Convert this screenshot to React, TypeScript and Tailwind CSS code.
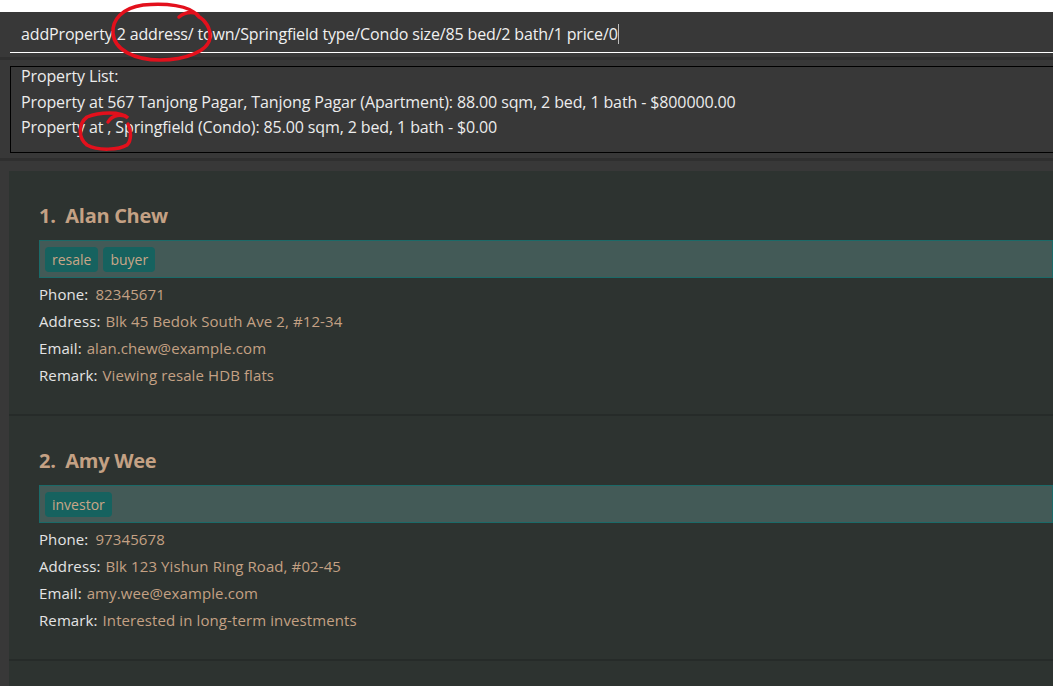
import React from "react";

const persons = [
  {
    name: "Alan Chew",
    tags: ["resale", "buyer"],
    phone: "82345671",
    address: "Blk 45 Bedok South Ave 2, #12-34",
    email: "alan.chew@example.com",
    remark: "Viewing resale HDB flats",
  },
  {
    name: "Amy Wee",
    tags: ["investor"],
    phone: "97345678",
    address: "Blk 123 Yishun Ring Road, #02-45",
    email: "amy.wee@example.com",
    remark: "Interested in long-term investments",
  },
  {
    name: "",
    tags: [],
    phone: "",
    address: "",
    email: "",
    remark: "",
  },
];

const Row = ({ label, value, extra = false }) => (
  <div className="flex text-[15px] leading-[27px] tracking-[0.1px]">
    <span className="text-[#e4e4e4]">{label}</span>
    <span className={`text-[#c4a184] ${extra ? "ml-[7px]" : "ml-[5px]"}`}>{value}</span>
  </div>
);

const PersonCard = ({ person, index }) => (
  <div className="h-[245px] border-b-2 border-[#262b29] bg-[#2d3330] pl-[30px] pt-[31px]">
    {person.name && (
      <>
        <p className="text-[20px] font-bold leading-[28px] tracking-[-0.3px] text-[#c4a184]">
          {index + 1}.&nbsp; {person.name}
        </p>
        <div className="mt-[10px] flex h-[38px] items-center gap-[5px] border border-[#1b6a68] bg-[#435a57] px-[5px]">
          {person.tags.map((tag) => (
            <span
              key={tag}
              className="rounded-[4px] bg-[#16625f] px-[7px] text-[14px] leading-[25px] text-[#c9a688]"
            >
              {tag}
            </span>
          ))}
        </div>
        <div className="mt-[3px]">
          <Row label="Phone:" value={person.phone} extra />
          <Row label="Address:" value={person.address} />
          <Row label="Email:" value={person.email} />
          <Row label="Remark:" value={person.remark} />
        </div>
      </>
    )}
  </div>
);

const App = () => {
  return (
    <div className="relative h-[686px] w-[1053px] overflow-hidden bg-white font-['Open_Sans',sans-serif]">
      <div className="h-3 bg-white" />
      <div className="flex h-[674px] flex-col bg-[#383838]">
        {/* command box */}
        <div className="pl-[10px]">
          <div className="flex h-[41px] items-start border-b border-white pl-[11px] pt-[10px]">
            <span className="text-[16px] leading-[24px] tracking-[-0.15px] text-[#f0f0f0]">
              addProperty 2 address/ town/Springfield type/Condo size/85 bed/2 bath/1 price/0
            </span>
            <span className="mt-[2px] h-[20px] w-px bg-[#bdbdbd]" />
          </div>
        </div>
        <div className="mt-[4px] h-[3px] bg-[#2f2f2f]" />
        {/* result box */}
        <div className="mt-[6px] pl-[10px]">
          <div className="h-[87px] overflow-hidden border-y border-l border-black pl-[10px]">
            <div className="-mt-[3px] text-[16px] leading-[25.5px] tracking-[-0.12px] text-[#ececec]">
              <p>Property List:</p>
              <p>Property at 567 Tanjong Pagar, Tanjong Pagar (Apartment): 88.00 sqm, 2 bed, 1 bath - $800000.00</p>
              <p>Property at , Springfield (Condo): 85.00 sqm, 2 bed, 1 bath - $0.00</p>
            </div>
          </div>
        </div>
        <div className="mt-[5px] h-[3px] bg-[#2f2f2f]" />
        {/* person list */}
        <div className="mt-[10px] flex-1 overflow-hidden pl-[9px]">
          {persons.map((p, i) => (
            <PersonCard key={i} person={p} index={i} />
          ))}
        </div>
      </div>
      {/* red hand-drawn annotations */}
      <svg className="pointer-events-none absolute left-0 top-0" width="1053" height="686">
        <path
          d="M179 17 C186 11 197 11 199 17 M198 16 C190 5 165 3 143 5 C122 8 112 20 113 33 C114 50 135 60 160 60 C186 60 208 51 210 38 C211 28 205 20 198 16"
          fill="none"
          stroke="#e3101c"
          strokeWidth="3.5"
          strokeLinecap="round"
        />
        <path
          d="M108 122 C112 115 122 113 128 118 C121 111 99 112 87 117 C78 124 78 138 87 145 C98 151 119 150 127 145 C132 140 131 130 128 124"
          fill="none"
          stroke="#e3101c"
          strokeWidth="3.5"
          strokeLinecap="round"
        />
      </svg>
    </div>
  );
};

export default App;
